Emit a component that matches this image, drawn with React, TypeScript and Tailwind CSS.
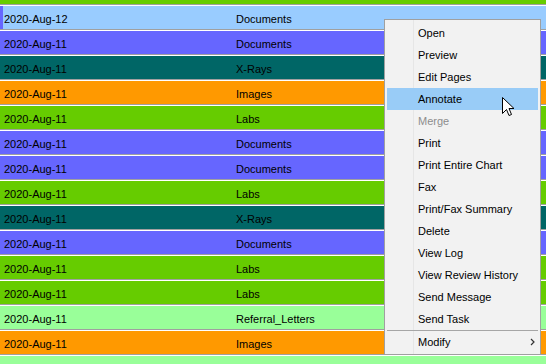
const rows = [
  { date: '2020-Aug-12', type: 'Documents', bg: 'bg-[#99ccff]', selected: true },
  { date: '2020-Aug-11', type: 'Documents', bg: 'bg-[#6666ff]' },
  { date: '2020-Aug-11', type: 'X-Rays', bg: 'bg-[#006666]' },
  { date: '2020-Aug-11', type: 'Images', bg: 'bg-[#ff9900]' },
  { date: '2020-Aug-11', type: 'Labs', bg: 'bg-[#66cc00]' },
  { date: '2020-Aug-11', type: 'Documents', bg: 'bg-[#6666ff]' },
  { date: '2020-Aug-11', type: 'Documents', bg: 'bg-[#6666ff]' },
  { date: '2020-Aug-11', type: 'Labs', bg: 'bg-[#66cc00]' },
  { date: '2020-Aug-11', type: 'X-Rays', bg: 'bg-[#006666]' },
  { date: '2020-Aug-11', type: 'Documents', bg: 'bg-[#6666ff]' },
  { date: '2020-Aug-11', type: 'Labs', bg: 'bg-[#66cc00]' },
  { date: '2020-Aug-11', type: 'Labs', bg: 'bg-[#66cc00]' },
  { date: '2020-Aug-11', type: 'Referral_Letters', bg: 'bg-[#99ff99]' },
  { date: '2020-Aug-11', type: 'Images', bg: 'bg-[#ff9900]' },
]

const items = [
  'Open',
  'Preview',
  'Edit Pages',
  'Annotate',
  'Merge',
  'Print',
  'Print Entire Chart',
  'Fax',
  'Print/Fax Summary',
  'Delete',
  'View Log',
  'View Review History',
  'Send Message',
  'Send Task',
]

function Row({ date, type, bg, selected }: { date: string; type: string; bg: string; selected?: boolean }) {
  return (
    <div className="border-b border-[#a0a0a0] mb-px">
      <div className={`${bg} h-[23px] flex items-center relative`}>
        {selected && <div className="absolute left-0 top-0 bottom-0 w-[3px] bg-[#6666ff]" />}
        <div className="w-[236px] pl-[4px] pt-[4px] text-black">{date}</div>
        <div className="pt-[4px] text-black">{type}</div>
      </div>
    </div>
  )
}

function Cursor() {
  return (
    <svg className="absolute left-[502px] top-[97px]" width="13" height="20" viewBox="0 0 13 20">
      <path
        d="M0.5 0.5 L0.5 16.5 L4.5 12.5 L7 18.5 L9.5 17.5 L7 11.5 L12 11.5 Z"
        fill="#fff"
        stroke="#000"
        strokeWidth="1"
        strokeLinejoin="miter"
      />
    </svg>
  )
}

export default function App() {
  return (
    <div className="relative w-[546px] h-[364px] overflow-hidden bg-white text-[11px] font-['Liberation_Sans',Arial,sans-serif]">
      {/* Grid rows */}
      <div className="flex flex-col">
        <div className="border-b border-[#a0a0a0] mb-px">
          <div className="h-[4px] bg-[#66cc00]" />
        </div>
        {rows.map((r, i) => (
          <Row key={i} {...r} />
        ))}
        <div className="h-[23px] bg-[#99ff99]" />
      </div>

      {/* Context menu */}
      <div className="absolute left-[384px] top-[19px] w-[157px] border border-[#a0a0a0] bg-[#f2f2f2] px-[2px] pt-[2px] pb-px">
        <div className="absolute left-[28px] top-0 bottom-0 w-px bg-[#e6e6e6]" />
        {items.map((label) => (
          <div
            key={label}
            className={`relative h-[22px] flex items-center pl-[31px] ${
              label === 'Annotate' ? 'bg-[#99ccf7]' : ''
            } ${label === 'Merge' ? 'text-[#8d8d8d]' : 'text-black'}`}
          >
            {label}
          </div>
        ))}
        <div className="relative h-px bg-[#a6a6a6]" />
        <div className="relative h-[22px] flex items-center pl-[31px] text-black">
          <span className="flex-1">Modify</span>
          <svg className="mr-[3px]" width="5" height="8" viewBox="0 0 5 8">
            <path d="M1 1 L4 4 L1 7" fill="none" stroke="#333" strokeWidth="1.2" />
          </svg>
        </div>
      </div>

      <Cursor />
    </div>
  )
}
